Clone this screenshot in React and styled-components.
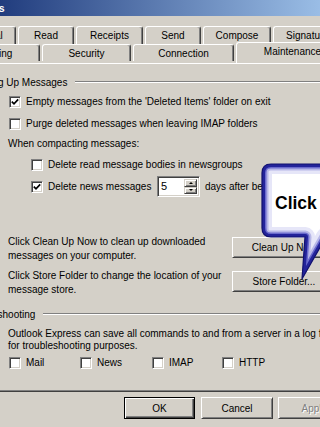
import React from 'react';
//Styles
import styled, { createGlobalStyle, css } from 'styled-components';

const GlobalStyle = createGlobalStyle`
  html, body {
    margin: 0;
    padding: 0;
    background: #d4d0c8;
  }
  body {
    font-family: "Liberation Sans", Arial, sans-serif;
    font-size: 10px;
    color: #000;
  }
`;

//Tab data
const topTabs = [
  { label: 'General', w: 62 },
  { label: 'Read', w: 56 },
  { label: 'Receipts', w: 67 },
  { label: 'Send', w: 56 },
  { label: 'Compose', w: 68 },
  { label: 'Signatures', w: 74 },
];

const frontTabs = [
  { label: 'Spelling', w: 91 },
  { label: 'Security', w: 89 },
  { label: 'Connection', w: 101 },
  { label: 'Maintenance', w: 113, active: true },
];

const BUBBLE =
  'M271 164 H350 V237 H326 L302 279 L305 237 H271 Q262 237 262 228 V173 Q262 164 271 164 Z';

const Check = ({ checked }) => (
  <Box>
    {checked && (
      <svg width="8" height="8" viewBox="0 0 8 8">
        <path d="M0.8 3.6 L3 5.8 L7.2 1.4" fill="none" stroke="#000" strokeWidth="1.7" />
      </svg>
    )}
  </Box>
);

const Callout = () => (
  <CalloutSvg width="320" height="427" viewBox="0 0 320 427">
    <defs>
      <clipPath id="bubble-clip">
        <path d={BUBBLE} />
      </clipPath>
    </defs>
    <path d={BUBBLE} fill="#fff" />
    <g clipPath="url(#bubble-clip)" fill="none" strokeLinejoin="round">
      <path d={BUBBLE} stroke="#e6e6f8" strokeWidth="20" />
      <path d={BUBBLE} stroke="#b8b8e8" strokeWidth="13" />
      <path d={BUBBLE} stroke="#6a6acc" strokeWidth="9" />
      <path d={BUBBLE} stroke="#23239a" strokeWidth="6" />
    </g>
    <path d={BUBBLE} fill="none" stroke="#12126e" strokeWidth="1.2" />
    <CalloutText x="275" y="209">Click</CalloutText>
  </CalloutSvg>
);

const App = () => {
  return (
    <>
      <GlobalStyle />
      <Screen>
        <Dialog>
          <TitleBar>Options</TitleBar>
          <Tabs>
            <TabRow $offset={14}>
              {topTabs.map(tab => (
                <Tab key={tab.label} $w={tab.w} $h={18}>{tab.label}</Tab>
              ))}
            </TabRow>
            <TabRow $offset={9}>
              {frontTabs.map(tab => (
                <Tab key={tab.label} $w={tab.w} $h={17} $active={tab.active}>{tab.label}</Tab>
              ))}
            </TabRow>
          </Tabs>
          <Panel>
            <Group>
              <Legend>Cleaning Up Messages</Legend>
              <GroupBody>
                <CheckRow $top={8}>
                  <Check checked />
                  <span>Empty messages from the 'Deleted Items' folder on exit</span>
                </CheckRow>
                <CheckRow $top={10}>
                  <Check />
                  <span>Purge deleted messages when leaving IMAP folders</span>
                </CheckRow>
                <Text $top={7} $lh={13}>When compacting messages:</Text>
                <CheckRow $top={9} $indent={22}>
                  <Check />
                  <span>Delete read message bodies in newsgroups</span>
                </CheckRow>
                <CheckRow $top={5} $indent={22} $h={21}>
                  <Check checked />
                  <Label $w={104}>Delete news messages</Label>
                  <Spinner>
                    <SpinValue>5</SpinValue>
                    <SpinButtons>
                      <SpinButton $up />
                      <SpinButton />
                    </SpinButtons>
                  </Spinner>
                  <Label>days after being downloaded</Label>
                </CheckRow>
                <ActionRow $top={38}>
                  <Text $lh={13.5}>
                    Click Clean Up Now to clean up downloaded<br />messages on your computer.
                  </Text>
                  <Button $w={104}>Clean Up Now</Button>
                </ActionRow>
                <ActionRow $top={7}>
                  <Text $lh={13.5}>
                    Click Store Folder to change the location of your<br />message store.
                  </Text>
                  <Button $w={104}>Store Folder...</Button>
                </ActionRow>
              </GroupBody>
            </Group>
            <Group $top={12}>
              <Legend>Troubleshooting</Legend>
              <GroupBody>
                <Text $top={8} $lh={12}>
                  Outlook Express can save all commands to and from a server in a log file<br />
                  for troubleshooting purposes.
                </Text>
                <LogOptions>
                  {['Mail', 'News', 'IMAP', 'HTTP'].map(name => (
                    <CheckRow key={name}>
                      <Check />
                      <span>{name}</span>
                    </CheckRow>
                  ))}
                </LogOptions>
              </GroupBody>
            </Group>
          </Panel>
          <ButtonBar>
            <Button $w={71} $h={22} $default>OK</Button>
            <Button $w={72} $h={22}>Cancel</Button>
            <Button $w={72} $h={22} disabled>Apply</Button>
          </ButtonBar>
        </Dialog>
        <Callout />
      </Screen>
    </>
  );
};

const Screen = styled.div`
  position: relative;
  width: 320px;
  height: 427px;
  overflow: hidden;
  background: #d4d0c8;
`;

const Dialog = styled.div`
  display: flex;
  flex-direction: column;
  width: 412px;
  margin-left: -60px;
`;

const TitleBar = styled.div`
  height: 16px;
  padding-left: 25px;
  background: linear-gradient(90deg, #0a246a 0%, #a6caf0 100%);
  color: #fff;
  font-weight: bold;
  font-size: 10.5px;
  line-height: 16px;
  white-space: nowrap;
`;

const Tabs = styled.div`
  display: flex;
  flex-direction: column;
  padding-top: 10px;
`;

const TabRow = styled.div`
  display: flex;
  align-items: flex-start;
  gap: 2px;
  padding-left: ${p => p.$offset}px;
`;

const Tab = styled.div`
  box-sizing: border-box;
  flex: none;
  display: flex;
  align-items: center;
  justify-content: center;
  width: ${p => p.$w}px;
  height: ${p => p.$h}px;
  border: 1px solid #fff;
  border-right-color: #404040;
  border-bottom: none;
  border-radius: 3px 3px 0 0;
  box-shadow: inset -1px 0 0 #808080;
  background: #d4d0c8;
  white-space: nowrap;
  ${p => p.$active && css`
    position: relative;
    z-index: 2;
    height: ${p.$h + 4}px;
    margin-top: -2px;
    padding-bottom: 3px;
  `}
`;

const Panel = styled.div`
  box-sizing: border-box;
  display: flex;
  flex-direction: column;
  width: 405px;
  height: 329px;
  margin-left: 4px;
  padding: 12px 8px 0 11px;
  border: 1px solid #fff;
  border-right-color: #404040;
  border-bottom-color: #404040;
  box-shadow: inset -1px -1px 0 #808080;
`;

const Group = styled.div`
  display: flex;
  flex-direction: column;
  margin-top: ${p => p.$top || 0}px;
`;

const Legend = styled.div`
  display: flex;
  align-items: center;
  gap: 8px;
  height: 12px;
  padding-left: 8px;
  white-space: nowrap;
  &::after {
    content: '';
    flex: 1;
    border-top: 1px solid #808080;
    border-bottom: 1px solid #fff;
  }
`;

const GroupBody = styled.div`
  display: flex;
  flex-direction: column;
  padding-left: 52px;
`;

const CheckRow = styled.div`
  display: flex;
  align-items: center;
  gap: 5px;
  height: ${p => p.$h || 12}px;
  margin-top: ${p => p.$top || 0}px;
  margin-left: ${p => 1 + (p.$indent || 0)}px;
  white-space: nowrap;
  line-height: 12px;
`;

const Box = styled.span`
  box-sizing: border-box;
  flex: none;
  display: flex;
  align-items: center;
  justify-content: center;
  width: 12px;
  height: 12px;
  border: 1px solid;
  border-color: #808080 #fff #fff #808080;
  box-shadow: inset 1px 1px 0 #404040, inset -1px -1px 0 #d4d0c8;
  background: #fff;
`;

const Label = styled.span`
  flex: none;
  width: ${p => (p.$w ? `${p.$w}px` : 'auto')};
  margin-right: ${p => (p.$w ? 0 : 0)}px;
`;

const Text = styled.div`
  margin-top: ${p => p.$top || 0}px;
  line-height: ${p => p.$lh}px;
  white-space: nowrap;
`;

const Spinner = styled.div`
  box-sizing: border-box;
  flex: none;
  display: flex;
  width: 43px;
  height: 21px;
  padding: 2px;
  border: 1px solid;
  border-color: #808080 #fff #fff #808080;
  box-shadow: inset 1px 1px 0 #404040, inset -1px -1px 0 #d4d0c8;
  background: #fff;
`;

const SpinValue = styled.span`
  flex: 1;
  padding-left: 1px;
  font-size: 11px;
  line-height: 15px;
`;

const SpinButtons = styled.div`
  display: flex;
  flex-direction: column;
  width: 13px;
`;

const SpinButton = styled.span`
  box-sizing: border-box;
  flex: 1;
  display: flex;
  align-items: center;
  justify-content: center;
  border: 1px solid;
  border-color: #d4d0c8 #404040 #404040 #d4d0c8;
  box-shadow: inset 1px 1px 0 #fff, inset -1px -1px 0 #808080;
  background: #d4d0c8;
  &::before {
    content: '';
    border-left: 2px solid transparent;
    border-right: 2px solid transparent;
    ${p => (p.$up ? 'border-bottom: 2px solid #000;' : 'border-top: 2px solid #000;')}
  }
`;

const ActionRow = styled.div`
  display: flex;
  align-items: flex-start;
  margin-top: ${p => p.$top}px;
  & > div {
    width: 224px;
  }
  & > button {
    margin-top: 1.5px;
  }
`;

const Button = styled.button`
  box-sizing: border-box;
  flex: none;
  width: ${p => p.$w}px;
  height: ${p => p.$h || 21}px;
  padding: 0;
  font-family: inherit;
  font-size: 10px;
  color: #000;
  background: #d4d0c8;
  border: 1px solid;
  border-color: #fff #404040 #404040 #fff;
  box-shadow: inset 1px 1px 0 #d4d0c8, inset -1px -1px 0 #808080;
  white-space: nowrap;
  ${p => p.$default && css`
    border-color: #000;
    box-shadow: inset 1px 1px 0 #fff, inset -1px -1px 0 #404040, inset -2px -2px 0 #808080;
  `}
  &:disabled {
    color: #808080;
    text-shadow: 1px 1px 0 #fff;
  }
`;

const LogOptions = styled.div`
  display: grid;
  grid-template-columns: 71px 72px 70px 1fr;
  margin-top: 5px;
`;

const ButtonBar = styled.div`
  display: flex;
  justify-content: flex-end;
  gap: 5px;
  padding: 5px 2px 0 0;
  & > button:first-child {
    margin-right: 1px;
  }
`;

const CalloutSvg = styled.svg`
  position: absolute;
  left: 0;
  top: 0;
  pointer-events: none;
`;

const CalloutText = styled.text`
  font-family: "Liberation Sans", Arial, sans-serif;
  font-weight: bold;
  font-size: 17.5px;
  fill: #000;
`;

export default App;
